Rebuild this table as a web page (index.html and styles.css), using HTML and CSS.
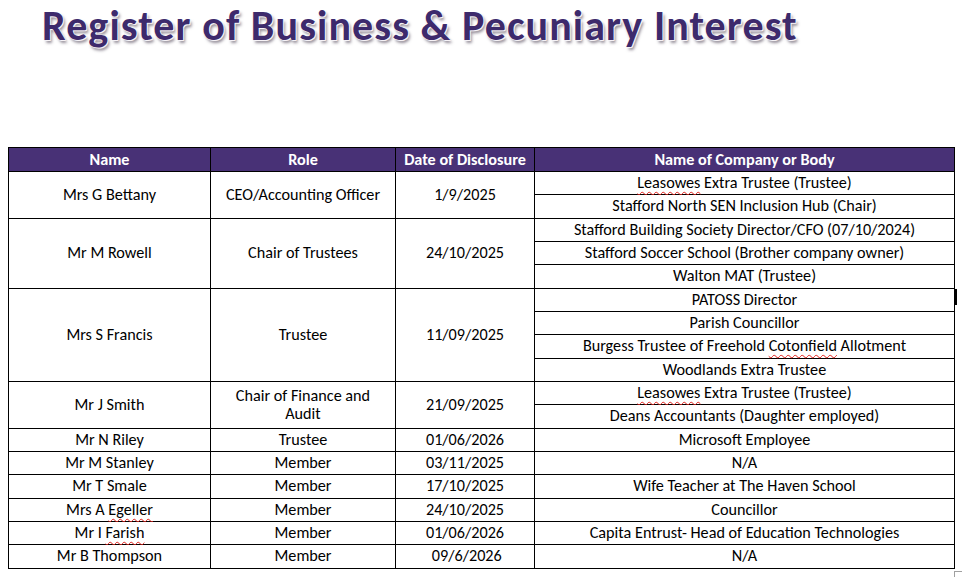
FILE: index.html
```html
<!DOCTYPE html>
<html lang="en">
<head>
<meta charset="utf-8">
<title>Register of Business &amp; Pecuniary Interest</title>
<link rel="stylesheet" href="styles.css">
</head>
<body>
<h1 class="title">Register of Business &amp; Pecuniary Interest</h1>
<div class="sheet">
  <div class="register">
    <div class="cell head">Name</div>
    <div class="cell head">Role</div>
    <div class="cell head">Date of Disclosure</div>
    <div class="cell head">Name of Company or Body</div>

    <div class="cell span2">Mrs G Bettany</div>
    <div class="cell span2">CEO/Accounting Officer</div>
    <div class="cell span2">1/9/2025</div>
    <div class="cell"><span class="sp">Leasowes</span>&nbsp;Extra Trustee (Trustee)</div>
    <div class="cell">Stafford North SEN Inclusion Hub (Chair)</div>

    <div class="cell span3">Mr M Rowell</div>
    <div class="cell span3">Chair of Trustees</div>
    <div class="cell span3">24/10/2025</div>
    <div class="cell">Stafford Building Society Director/CFO (07/10/2024)</div>
    <div class="cell">Stafford Soccer School (Brother company owner)</div>
    <div class="cell">Walton MAT (Trustee)</div>

    <div class="cell span4">Mrs S Francis</div>
    <div class="cell span4">Trustee</div>
    <div class="cell span4">11/09/2025</div>
    <div class="cell">PATOSS Director</div>
    <div class="cell">Parish Councillor</div>
    <div class="cell">Burgess Trustee of Freehold&nbsp;<span class="sp">Cotonfield</span>&nbsp;Allotment</div>
    <div class="cell">Woodlands Extra Trustee</div>

    <div class="cell span2">Mr J Smith</div>
    <div class="cell span2 wrap">Chair of Finance and<br>Audit</div>
    <div class="cell span2">21/09/2025</div>
    <div class="cell"><span class="sp">Leasowes</span>&nbsp;Extra Trustee (Trustee)</div>
    <div class="cell">Deans Accountants (Daughter employed)</div>

    <div class="cell">Mr N Riley</div>
    <div class="cell">Trustee</div>
    <div class="cell">01/06/2026</div>
    <div class="cell">Microsoft Employee</div>

    <div class="cell">Mr M Stanley</div>
    <div class="cell">Member</div>
    <div class="cell">03/11/2025</div>
    <div class="cell">N/A</div>

    <div class="cell">Mr T Smale</div>
    <div class="cell">Member</div>
    <div class="cell">17/10/2025</div>
    <div class="cell">Wife Teacher at The Haven School</div>

    <div class="cell">Mrs A&nbsp;<span class="sp">Egeller</span></div>
    <div class="cell">Member</div>
    <div class="cell">24/10/2025</div>
    <div class="cell">Councillor</div>

    <div class="cell">Mr I&nbsp;<span class="sp">Farish</span></div>
    <div class="cell">Member</div>
    <div class="cell">01/06/2026</div>
    <div class="cell">Capita Entrust- Head of Education Technologies</div>

    <div class="cell">Mr B Thompson</div>
    <div class="cell">Member</div>
    <div class="cell">&nbsp;09/6/2026</div>
    <div class="cell">N/A</div>
  </div>
  <span class="caret"></span>
  <span class="corner"></span>
</div>
</body>
</html>
```

FILE: styles.css
```css
html, body {
  margin: 0;
  padding: 0;
  background: #ffffff;
}

body {
  width: 962px;
  height: 577px;
  overflow: hidden;
  font-family: Carlito, Calibri, "Open Sans", "Liberation Sans", sans-serif;
  color: #000000;
}

.title {
  margin: 0;
  padding: 0 0 0 42px;
  height: 52px;
  font-family: Carlito, Calibri, "Open Sans", "Liberation Sans", sans-serif;
  font-weight: 700;
  font-size: 42px;
  letter-spacing: 1.1px;
  line-height: 52px;
  color: #3d2a6c;
  white-space: nowrap;
  text-shadow:
    0 0 1px #ffffff,
    0 0 2px #ffffff,
    1px 1px 0 #f4eef4,
    2px 3px 3px rgba(60, 50, 70, 0.55);
}

.sheet {
  position: relative;
  margin: 95px 0 0 8px;
  width: 947px;
}

.register {
  display: grid;
  grid-template-columns: 201px 184px 138px 419px;
  grid-template-rows: 23px repeat(17, 22.33px);
  gap: 1px;
  padding: 1px;
  background: #000000;
}

.cell {
  background: #ffffff;
  display: flex;
  align-items: center;
  justify-content: center;
  text-align: center;
  font-size: 16.2px;
  line-height: 18px;
  white-space: nowrap;
}

.head {
  background: #483176;
  color: #ffffff;
  font-weight: 700;
}

.span2 { grid-row: span 2; }
.span3 { grid-row: span 3; }
.span4 { grid-row: span 4; }

.sp {
  text-decoration: underline wavy #e0201a;
  text-decoration-thickness: 1px;
  text-underline-offset: 3px;
}

.caret {
  position: absolute;
  left: 947px;
  top: 142px;
  width: 2px;
  height: 16px;
  background: #000000;
}

.corner {
  position: absolute;
  left: 946px;
  top: 424px;
  width: 10px;
  height: 10px;
  border-left: 1px solid #a0a0a0;
  border-top: 1px solid #a0a0a0;
}
```
